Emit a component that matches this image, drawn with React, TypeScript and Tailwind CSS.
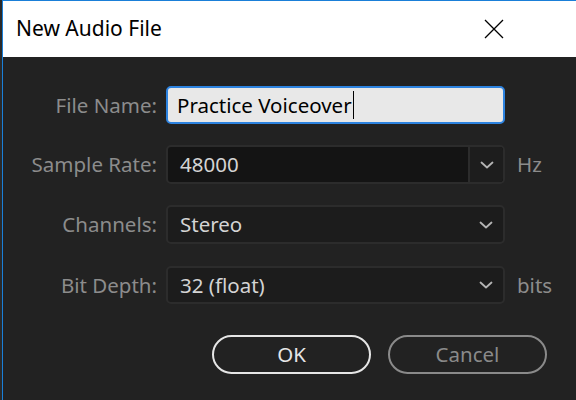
import React from 'react';

function Chevron() {
  return (
    <svg width="14" height="8" viewBox="0 0 14 8" fill="none">
      <path d="M1.5 1.5 L7 6.5 L12.5 1.5" stroke="#b4b4b4" strokeWidth="1.8" strokeLinecap="round" strokeLinejoin="round" />
    </svg>
  );
}

function Row({ label, children, suffix }: { label: string; children: React.ReactNode; suffix?: string }) {
  return (
    <div className="flex items-center">
      <div className="w-[154px] text-right text-[20.5px] text-[#8c8c8c]">{label}</div>
      <div className="ml-[9px] w-[339px]">{children}</div>
      {suffix && <div className="ml-3 text-[20.5px] text-[#8c8c8c]">{suffix}</div>}
    </div>
  );
}

export default function App() {
  return (
    <div className="w-[576px] h-[400px] bg-[#2a2a2a] pl-[2px] overflow-hidden" style={{ fontFamily: '"Noto Sans", "Open Sans", sans-serif' }}>
      <div className="h-full border-l border-t border-[#1a7fd8] flex flex-col">
        {/* Title bar */}
        <div className="h-[56px] bg-white flex items-center justify-between pl-[13px] pr-[72px]">
          <span className="text-[21px] text-black">New Audio File</span>
          <svg width="20" height="20" viewBox="0 0 20 20">
            <path d="M1 1 L19 19 M19 1 L1 19" stroke="#000" strokeWidth="1.3" />
          </svg>
        </div>

        {/* Body */}
        <div className="flex-1 bg-[#222222] pt-[29px] flex flex-col">
          <Row label="File Name:">
            <div className="h-[38px] rounded-[5px] border-2 border-[#2d83e0] bg-[#e8e8e8] flex items-center pl-[9px] text-[20.5px] text-black">
              <span>Practice Voiceover</span>
              <span className="ml-[1px] w-px h-[28px] bg-black" />
            </div>
          </Row>

          <div className="mt-[21px]">
            <Row label="Sample Rate:" suffix="Hz">
              <div className="h-[39px] rounded-[5px] border-2 border-[#2c2c2c] bg-[#141414] flex items-center text-[20.5px] text-[#d4d4d4]">
                <span className="flex-1 pl-[12px]">48000</span>
                <div className="w-[35px] h-full border-l-2 border-[#2c2c2c] bg-[#1d1d1d] flex items-center justify-center rounded-r-[4px]">
                  <Chevron />
                </div>
              </div>
            </Row>
          </div>

          <div className="mt-[21px]">
            <Row label="Channels:">
              <div className="h-[39px] rounded-[5px] border-2 border-[#2c2c2c] bg-[#1c1c1c] flex items-center text-[20.5px] text-[#d4d4d4]">
                <span className="flex-1 pl-[12px]">Stereo</span>
                <div className="w-[35px] flex items-center justify-center">
                  <Chevron />
                </div>
              </div>
            </Row>
          </div>

          <div className="mt-[22px]">
            <Row label="Bit Depth:" suffix="bits">
              <div className="h-[38px] rounded-[5px] border-2 border-[#2c2c2c] bg-[#1c1c1c] flex items-center text-[20.5px] text-[#d4d4d4]">
                <span className="flex-1 pl-[12px]">32 (float)</span>
                <div className="w-[35px] flex items-center justify-center">
                  <Chevron />
                </div>
              </div>
            </Row>
          </div>

          <div className="mt-[31px] flex pl-[209px] gap-[17px]">
            <button className="w-[159px] h-[39px] rounded-full border-2 border-[#e6e6e6] text-[20.5px] text-[#e6e6e6]">OK</button>
            <button className="w-[159px] h-[39px] rounded-full border-2 border-[#8a8a8a] text-[20.5px] text-[#8a8a8a]">Cancel</button>
          </div>
        </div>
      </div>
    </div>
  );
}
